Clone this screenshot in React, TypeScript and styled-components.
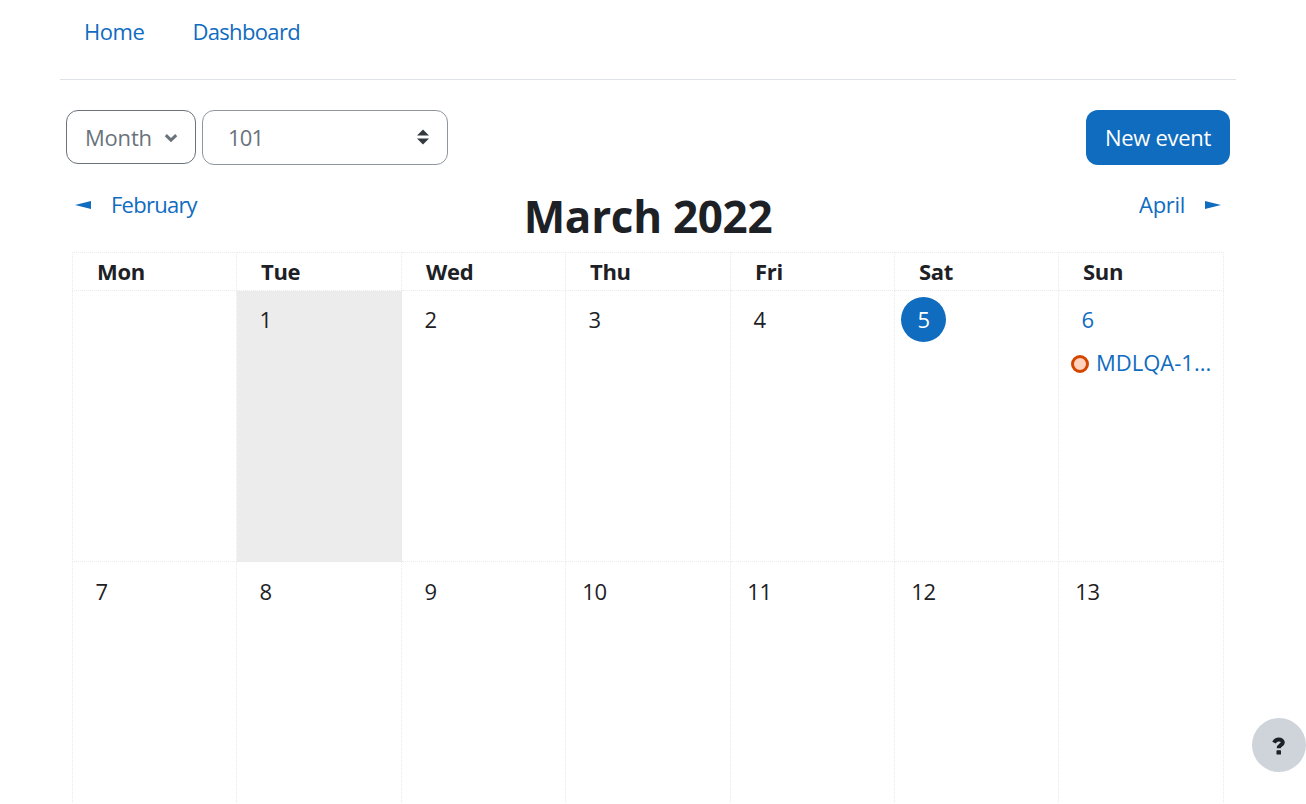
import React from 'react'
import styled, { createGlobalStyle } from 'styled-components'

const GlobalStyle = createGlobalStyle`
    * {
        box-sizing: border-box;
    }

    body {
        margin: 0;
        overflow: hidden;
        background-color: #fff;
        color: #1d2125;
        font-family: "Open Sans", "Noto Sans", sans-serif;
        font-size: 22px;
        line-height: 34px;
        letter-spacing: -0.3px;
    }
`;

const Page = styled.div`
    position: relative;
    height: 804px;
    padding: 0 70px 0 60px;
    overflow: hidden;
`;

const Nav = styled.nav`
    display: flex;
    gap: 48px;
    height: 80px;
    padding: 14px 24px 0;
    border-bottom: 1px solid #dee2e6;
`;

const Link = styled.a<{ $spacing?: number }>`
    color: #0f6cbf;
    text-decoration: none;
    letter-spacing: ${({ $spacing = -0.3 }) => $spacing}px;
`;

const Toolbar = styled.div`
    display: flex;
    align-items: flex-start;
    gap: 6px;
    padding: 30px 6px 0;
`;

const ViewButton = styled.button`
    display: flex;
    align-items: center;
    justify-content: space-between;
    width: 130px;
    height: 54px;
    padding: 0 17px 0 18px;
    border: 1px solid #6a737b;
    border-radius: 12px;
    background: none;
    color: #6a737b;
    font: inherit;
    letter-spacing: -0.2px;

    & svg {
        margin-top: 2px;
    }
`;

const CourseSelect = styled.div`
    display: flex;
    align-items: center;
    justify-content: space-between;
    width: 246px;
    height: 55px;
    padding: 0 18px 1px 25px;
    border: 1px solid #8f959e;
    border-radius: 12px;
    color: #6a737b;
    letter-spacing: -0.8px;
`;

const NewEvent = styled.button`
    width: 144px;
    height: 55px;
    margin-left: auto;
    padding: 0 0 1px;
    border: 0;
    border-radius: 12px;
    background-color: #0f6cbf;
    color: #fff;
    font: inherit;
    letter-spacing: -0.3px;
`;

const MonthBar = styled.div`
    display: grid;
    grid-template-columns: 1fr auto 1fr;
    height: 87px;
    padding: 22px 15px 0;
`;

const MonthLink = styled(Link)<{ $end?: boolean }>`
    display: flex;
    align-items: center;
    gap: 20px;
    height: 34px;
    justify-self: ${({ $end }) => ($end ? 'end' : 'start')};

    & svg {
        margin-top: 2px;
    }
`;

const Title = styled.h2`
    margin: 0;
    padding-top: 2px;
    font-size: 44px;
    font-weight: 700;
    line-height: 54px;
    letter-spacing: -0.3px;
`;

const Calendar = styled.table`
    width: 1152px;
    margin-left: 12px;
    table-layout: fixed;
    border-collapse: collapse;
`;

const Head = styled.th<{ $width: number }>`
    width: ${({ $width }) => $width}px;
    height: 38px;
    padding: 0 0 0 24px;
    border: 1px dotted #eaeaea;
    font-weight: 700;
    line-height: 37px;
    text-align: left;
    letter-spacing: -0.3px;
`;

const Cell = styled.td<{ $shaded?: boolean }>`
    height: 271px;
    padding: 6px 6px 0;
    border: 1px dotted #eaeaea;
    background-color: ${({ $shaded }) => ($shaded ? '#ececec' : 'transparent')};
    vertical-align: top;
`;

const Week = styled.tr`
    & + & ${Cell} {
        padding-top: 7px;
    }
`;

const Day = styled.div<{ $today?: boolean, $linked?: boolean }>`
    width: 45px;
    height: 45px;
    border-radius: 50%;
    background-color: ${({ $today }) => ($today ? '#0f6cbf' : 'transparent')};
    color: ${({ $today, $linked }) => ($today ? '#fff' : $linked ? '#0f6cbf' : 'inherit')};
    line-height: 44px;
    text-align: center;
    letter-spacing: -0.4px;
`;

const Event = styled(Link)`
    display: flex;
    align-items: center;
    gap: 7px;
    margin-top: 3px;
    padding-left: 6px;
    white-space: nowrap;
`;

const EventDot = styled.span`
    flex: none;
    width: 18px;
    height: 18px;
    margin-top: 4px;
    border: 3px solid #d34600;
    border-radius: 50%;
    background-color: #ffd3c0;
`;

const HelpButton = styled.button`
    position: absolute;
    top: 718px;
    left: 1252px;
    display: flex;
    align-items: center;
    justify-content: center;
    width: 54px;
    height: 54px;
    padding: 2px 0 0;
    border: 0;
    border-radius: 50%;
    background-color: #ced4da;
`;

const ChevronDown = () => (
    <svg width="14" height="10" viewBox="0 0 14 10">
        <path d="M1.8 2.2L7 7.2L12.2 2.2" fill="none" stroke="#6a737b" strokeWidth="3" />
    </svg>
)

const SortArrows = () => (
    <svg width="12" height="16" viewBox="0 0 12 16">
        <path d="M0 6.5L6 0.5L12 6.5ZM0 9.5H12L6 15.5Z" fill="#343a40" />
    </svg>
)

const Pointer = ({ left }: { left?: boolean }) => (
    <svg width="16" height="8" viewBox="0 0 16 8">
        <path d={left ? 'M16 0V8L0 4Z' : 'M0 0V8L16 4Z'} fill="#0f6cbf" />
    </svg>
)

const QuestionMark = () => (
    <svg width="14" height="18" viewBox="0 0 14 18">
        <path
            d="M2 5.6C3.1 3.6 4.6 2.5 6.8 2.5C9 2.5 10.8 3.7 10.8 5.5C10.8 7.9 6.7 8 6.7 11.2"
            fill="none"
            stroke="#1d2125"
            strokeWidth="4"
        />
        <rect x="4.5" y="13.2" width="4.5" height="4.3" rx="0.6" fill="#1d2125" />
    </svg>
)

const days = [
    { name: 'Mon', width: 164 },
    { name: 'Tue', width: 165 },
    { name: 'Wed', width: 164 },
    { name: 'Thu', width: 165 },
    { name: 'Fri', width: 164 },
    { name: 'Sat', width: 164 },
    { name: 'Sun', width: 165 },
]

const weeks = [
    [null, 1, 2, 3, 4, 5, 6],
    [7, 8, 9, 10, 11, 12, 13],
]

const App = () => (
    <>
        <GlobalStyle />
        <Page>
            <Nav>
                <Link $spacing={-0.45}>Home</Link>
                <Link $spacing={-0.65}>Dashboard</Link>
            </Nav>
            <Toolbar>
                <ViewButton>
                    Month
                    <ChevronDown />
                </ViewButton>
                <CourseSelect>
                    101
                    <SortArrows />
                </CourseSelect>
                <NewEvent>New event</NewEvent>
            </Toolbar>
            <MonthBar>
                <MonthLink $spacing={-0.75}>
                    <Pointer left />
                    February
                </MonthLink>
                <Title>March 2022</Title>
                <MonthLink $end>
                    April
                    <Pointer />
                </MonthLink>
            </MonthBar>
            <Calendar>
                <thead>
                    <tr>
                        {days.map(({ name, width }) => <Head key={name} $width={width}>{name}</Head>)}
                    </tr>
                </thead>
                <tbody>
                    {weeks.map((week, i) => (
                        <Week key={i}>
                            {week.map((day, j) => (
                                <Cell key={j} $shaded={day === 1}>
                                    {day && <Day $today={day === 5} $linked={day === 6}>{day}</Day>}
                                    {day === 6 && (
                                        <Event $spacing={0}>
                                            <EventDot />
                                            MDLQA-1...
                                        </Event>
                                    )}
                                </Cell>
                            ))}
                        </Week>
                    ))}
                </tbody>
            </Calendar>
            <HelpButton>
                <QuestionMark />
            </HelpButton>
        </Page>
    </>
)

export default App
